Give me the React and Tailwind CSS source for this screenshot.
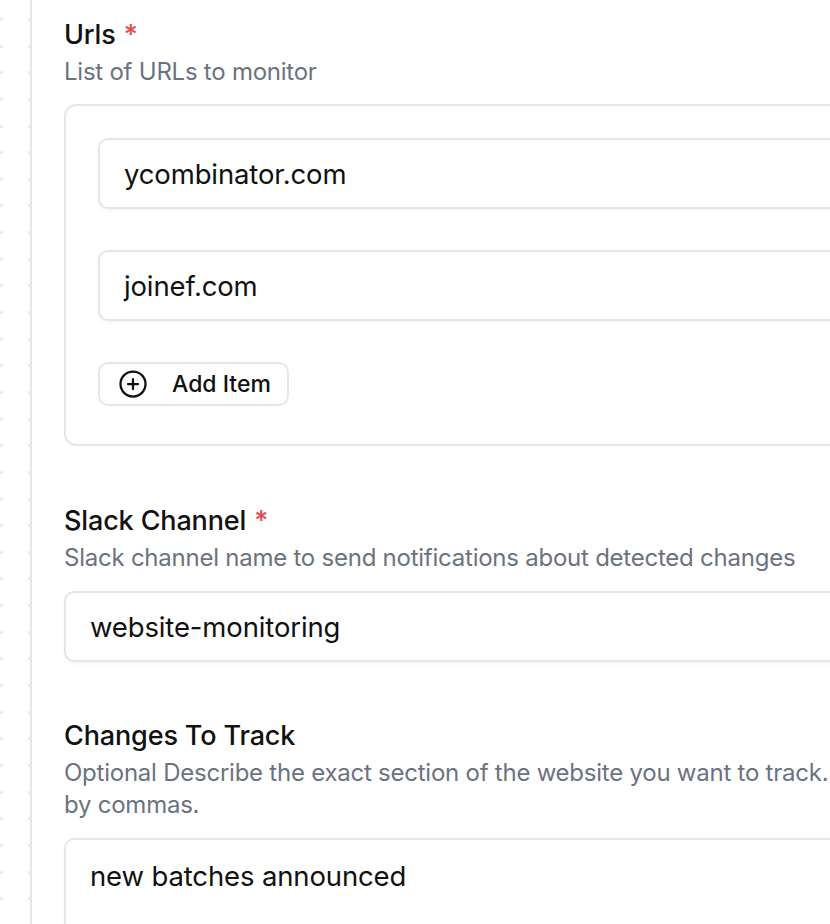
import React from "react";

function Dots() {
  const rows = Array.from({ length: 34 });
  return (
    <div className="flex w-[30px] shrink-0 flex-col pt-[18px]">
      {rows.map((_, i) => (
        <div key={i} className="flex h-[28px] justify-between">
          <div className="h-[3px] w-[3px] bg-[#ececec]" />
          <div className="h-[3px] w-[2px] bg-[#ececec]" />
        </div>
      ))}
    </div>
  );
}

function Label({ children, required }) {
  return (
    <div className="flex items-center gap-[8px] text-[27px] font-medium leading-[34px] text-[#111111] tracking-[-0.005em]">
      <span>{children}</span>
      {required && <span className="text-[#e5484d]">*</span>}
    </div>
  );
}

function Desc({ children }) {
  return (
    <div className="mt-[4px] text-[24px] leading-[32px] text-[#6b7280] tracking-[-0.01em]">
      {children}
    </div>
  );
}

function Input({ value }) {
  return (
    <div className="flex h-[71px] items-center rounded-[10px] border-2 border-[#e6e6e6] bg-white px-[24px] pt-[2px] text-[27.5px] text-[#111111] shadow-[0_2px_3px_rgba(0,0,0,0.04)] tracking-[-0.005em]">
      {value}
    </div>
  );
}

export default function App() {
  return (
    <div
      className="flex h-[924px] w-[830px] overflow-hidden bg-white"
      style={{ fontFamily: "Inter, 'Noto Sans', sans-serif" }}
    >
      <Dots />
      <div className="h-full w-[2px] shrink-0 bg-[#e6e6e6]" />
      <div className="w-[1100px] shrink-0 pl-[32px] pt-[18px]">
        <Label required>Urls</Label>
        <Desc>List of URLs to monitor</Desc>
        <div className="mt-[16px] flex flex-col rounded-[12px] border-2 border-[#e6e6e6] px-[32px] pb-[38px] pt-[32px]">
          <div className="flex flex-col gap-[41px]">
            <Input value="ycombinator.com" />
            <Input value="joinef.com" />
          </div>
          <div className="mt-[41px] flex">
            <button className="flex h-[44px] items-center gap-[24px] rounded-[10px] border-2 border-[#e6e6e6] bg-white pl-[18px] pr-[16px] text-[23px] font-medium text-[#111111]">
              <svg width="30" height="30" viewBox="0 0 24 24" fill="none" stroke="#111111" strokeWidth="1.8" strokeLinecap="round">
                <circle cx="12" cy="12" r="10" />
                <path d="M12 8v8M8 12h8" />
              </svg>
              <span>Add Item</span>
            </button>
          </div>
        </div>

        <div className="mt-[58px]">
          <Label required>Slack Channel</Label>
          <Desc>Slack channel name to send notifications about detected changes</Desc>
          <div className="mt-[17px]">
            <Input value="website-monitoring" />
          </div>
        </div>

        <div className="mt-[57px]">
          <Label>Changes To Track</Label>
          <Desc>
            <span className="whitespace-nowrap">
              Optional Describe the exact section of the website you want to track. You can list multiple sections separated
            </span>
            <br />
            by commas.
          </Desc>
          <div className="mt-[17px] h-[160px] rounded-[10px] border-2 border-[#e6e6e6] px-[24px] pt-[17px] text-[27.5px] leading-[38px] text-[#111111] shadow-[0_2px_3px_rgba(0,0,0,0.04)] tracking-[-0.005em]">
            new batches announced
          </div>
        </div>
      </div>
    </div>
  );
}
